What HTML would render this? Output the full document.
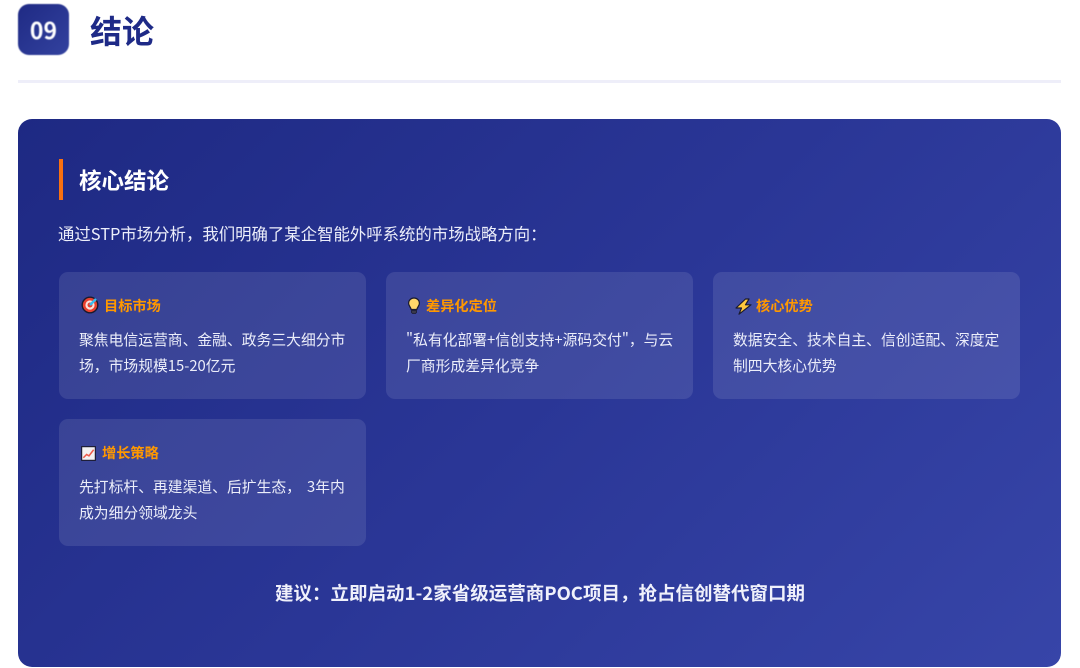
<!DOCTYPE html>
<html lang="zh-CN"><head><meta charset="utf-8"><title>结论</title>
<style>
*{margin:0;padding:0;box-sizing:border-box}
html,body{width:1080px;height:668px;overflow:hidden;background:#fff}
body{position:relative;font-family:"Noto Sans CJK SC","Liberation Sans",sans-serif}
.a{position:absolute;white-space:nowrap}
.num{left:18px;top:4px;width:51px;height:51px;border-radius:11px;background:linear-gradient(135deg,#1f2a84,#33429f);color:#fff;font-size:23px;font-weight:700;line-height:50px;text-align:center;filter:blur(.4px)}
.title{left:90px;top:6px;font-size:32px;line-height:48px;font-weight:700;color:#1e2a87;filter:blur(.3px)}
.rule{left:18px;top:80px;width:1043px;height:3px;background:#eeeef9}
.panel{left:18px;top:119px;width:1043px;height:548px;border-radius:14px;background:linear-gradient(135deg,#1e2983 0%,#2a3696 50%,#3745a8 100%)}
.bar{left:59px;top:159px;width:4px;height:41px;background:#f97010}
.h{left:79px;top:163px;font-size:22.5px;line-height:34px;font-weight:700;color:#fff;filter:blur(.3px)}
.intro{left:58px;top:221px;font-size:16.4px;line-height:25px;color:#eceefa;filter:blur(.35px)}
.card{position:absolute;width:307px;height:127px;border-radius:9px;background:rgba(255,255,255,.1)}
.t{position:absolute;top:24px;font-size:14.2px;line-height:21px;font-weight:700;color:#ff9800;white-space:nowrap;filter:blur(.3px)}
.b{position:absolute;left:20px;top:55px;font-size:14.8px;line-height:25.6px;color:#eceefa;white-space:nowrap;filter:blur(.35px)}
.card svg{position:absolute;filter:blur(.3px)}
.foot{left:0;width:1080px;top:579px;text-align:center;font-size:18.5px;line-height:28px;font-weight:700;color:#f0f1fb;filter:blur(.3px)}
</style></head><body>
<div class="a num">09</div>
<div class="a title">结论</div>
<div class="a rule"></div>
<div class="a panel"></div>
<div class="a bar"></div>
<div class="a h">核心结论</div>
<div class="a intro">通过STP市场分析，我们明确了某企智能外呼系统的市场战略方向：</div>

<div class="card" style="left:59px;top:272px">
<svg style="left:21.500px;top:24px" width="18" height="18" viewBox="0 0 18 18"><circle cx="9" cy="9" r="7.800" fill="#e8402f" stroke="#1b1b2e" stroke-width="1.400"/><circle cx="9" cy="9" r="4.600" fill="#fbe3dc"/><circle cx="9" cy="9" r="2.500" fill="#e8402f"/><path d="M9 9 15 3" stroke="#38bdf0" stroke-width="2.600"/></svg>
<div class="t" style="left:45px">目标市场</div>
<div class="b">聚焦电信运营商、金融、政务三大细分市<br>场，市场规模15-20亿元</div></div>

<div class="card" style="left:386px;top:272px">
<svg style="left:21px;top:25px" width="14" height="18" viewBox="0 0 14 18"><path d="M7 1C3.800 1 1.600 3.300 1.600 6.200c0 2.600 2 3.800 2.600 6.300h5.600c.6-2.500 2.600-3.700 2.600-6.300C12.400 3.300 10.200 1 7 1Z" fill="#ffd76a" stroke="#1b1b2e" stroke-width="1.200"/><path d="M4.500 13.500h5v2l-1 1h-3l-1-1Z" fill="#3a3a4c" stroke="#1b1b2e" stroke-width=".8"/></svg>
<div class="t" style="left:40px">差异化定位</div>
<div class="b">"私有化部署+信创支持+源码交付"，与云<br>厂商形成差异化竞争</div></div>

<div class="card" style="left:713px;top:272px">
<svg style="left:22px;top:25.500px" width="17" height="17" viewBox="0 0 17 17"><path d="M10.500 1 1 10h5.500L4 16.200 16 6.800H10.500L14 1Z" fill="#ffc83d" stroke="#1b1b2e" stroke-width="1.200" stroke-linejoin="round"/></svg>
<div class="t" style="left:43px">核心优势</div>
<div class="b">数据安全、技术自主、信创适配、深度定<br>制四大核心优势</div></div>

<div class="card" style="left:59px;top:419px">
<svg style="left:22px;top:27px" width="15" height="15" viewBox="0 0 16 16"><rect x=".7" y=".7" width="14.600" height="14.600" fill="#f3f1f1" stroke="#1b1b2e" stroke-width="1.200"/><path d="M2.500 12.500 6 9l2.500 1.500L13.500 4" fill="none" stroke="#ee5a4a" stroke-width="1.600"/></svg>
<div class="t" style="left:43px">增长策略</div>
<div class="b" style="top:55px">先打标杆、再建渠道、后扩生态，<span style="margin-left:6px">3</span>年内<br>成为细分领域龙头</div></div>

<div class="a foot">建议：立即启动1-2家省级运营商POC项目，抢占信创替代窗口期</div>
</body></html>
